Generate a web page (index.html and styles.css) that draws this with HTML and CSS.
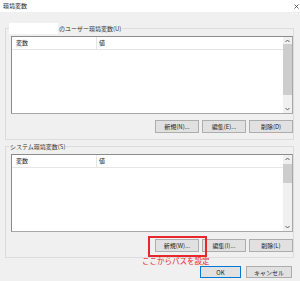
FILE: index.html
```html
<!DOCTYPE html>
<html lang="ja">
<head>
  <meta charset="UTF-8" />
  <title>環境変数</title>
  <link rel="stylesheet" href="styles.css">
</head>
<body>

  <div class="window">
    <div class="titlebar">
      <span class="title">環境変数</span>
      <svg class="close" width="5" height="5" viewBox="0 0 5 5">
        <path d="M0.5 0.5 L4.5 4.5 M4.5 0.5 L0.5 4.5" stroke="#444" stroke-width="0.8" fill="none" />
      </svg>
    </div>

    <div class="content">
      <div class="group">
        <div class="group-title"><span class="redacted"></span><span>のユーザー環境変数(U)</span></div>
        <div class="list">
          <div class="list-main">
            <div class="list-head">
              <span class="col-name">変数</span>
              <span class="col-value">値</span>
            </div>
          </div>
          <div class="scrollbar">
            <svg class="arrow" width="9" height="8" viewBox="0 0 9 8"><path d="M2.5 5 L4.5 3 L6.5 5" stroke="#606060" stroke-width="1" fill="none" /></svg>
            <div class="track"><div class="thumb thumb-user"></div></div>
            <svg class="arrow" width="9" height="8" viewBox="0 0 9 8"><path d="M2.5 3 L4.5 5 L6.5 3" stroke="#606060" stroke-width="1" fill="none" /></svg>
          </div>
        </div>
        <div class="actions">
          <button class="btn">新規(N)...</button>
          <button class="btn">編集(E)...</button>
          <button class="btn">削除(D)</button>
        </div>
      </div>

      <div class="group group-system">
        <div class="group-title"><span>システム環境変数(S)</span></div>
        <div class="list list-system">
          <div class="list-main">
            <div class="list-head">
              <span class="col-name">変数</span>
              <span class="col-value">値</span>
            </div>
          </div>
          <div class="scrollbar">
            <svg class="arrow" width="9" height="8" viewBox="0 0 9 8"><path d="M2.5 5 L4.5 3 L6.5 5" stroke="#606060" stroke-width="1" fill="none" /></svg>
            <div class="track"><div class="thumb thumb-system"></div></div>
            <svg class="arrow" width="9" height="8" viewBox="0 0 9 8"><path d="M2.5 3 L4.5 5 L6.5 3" stroke="#606060" stroke-width="1" fill="none" /></svg>
          </div>
        </div>
        <div class="actions">
          <span class="marked">
            <button class="btn">新規(W)...</button>
            <span class="callout"></span>
            <span class="callout-text">ここからパスを設定</span>
          </span>
          <button class="btn">編集(I)...</button>
          <button class="btn">削除(L)</button>
        </div>
      </div>
    </div>

    <div class="footer">
      <button class="btn btn-ok">OK</button>
      <button class="btn btn-cancel">キャンセル</button>
    </div>
  </div>

</body>
</html>
```

FILE: styles.css
```css
* {
  box-sizing: border-box;
}
body {
  margin: 0;
  font-family: "Noto Sans CJK JP", "Noto Sans", sans-serif;
  font-size: 6px;
  color: #222;
  background: #f0f0f0;
}
.window {
  width: 300px;
  height: 281px;
  display: flex;
  flex-direction: column;
  background: #f0f0f0;
}
.titlebar {
  height: 12px;
  flex: none;
  background: #fff;
  display: flex;
  align-items: center;
  justify-content: space-between;
  padding: 0 1px 0 3px;
}
.title {
  line-height: 10px;
}
.content {
  padding: 16px 6px 0 5px;
}
.group {
  display: flex;
  flex-direction: column;
  padding: 0 0 6px 5px;
  border: 1px solid #dcdcdc;
}
.group-system {
  margin-top: 6px;
  padding-bottom: 5px;
}
.group-title {
  align-self: flex-start;
  display: flex;
  height: 11px;
  line-height: 11px;
  margin: -6px 0 0 -2px;
  padding: 0 1px 0 0;
  background: #f0f0f0;
  color: #333;
}
.group-system .group-title {
  padding-left: 1px;
}
.redacted {
  width: 49px;
  height: 11px;
  margin-right: 1px;
  background: #fff;
}
.list {
  display: flex;
  height: 78px;
  margin-top: 2px;
  background: #fff;
  border: 1px solid #a8a8a8;
  border-left-color: #8c8c8c;
  border-top-color: #8c8c8c;
}
.list-main {
  flex: 1;
}
.list-head {
  display: flex;
  height: 13px;
  line-height: 12px;
  border-bottom: 1px solid #e5e5e5;
}
.col-name {
  width: 85px;
  padding-left: 4px;
  border-right: 1px solid #e5e5e5;
}
.col-value {
  padding-left: 2px;
}
.scrollbar {
  width: 9px;
  display: flex;
  flex-direction: column;
  background: #f0f0f0;
}
.arrow {
  display: block;
  flex: none;
}
.track {
  flex: 1;
}
.thumb {
  background: #cdcdcd;
}
.thumb-user {
  height: 51px;
  margin-top: -1px;
}
.thumb-system {
  height: 19px;
  margin-top: 1px;
}
.actions {
  display: flex;
  justify-content: flex-end;
  gap: 3px;
  margin-top: 6px;
}
.group-system .actions {
  margin-top: 7px;
}
.btn {
  width: 44px;
  height: 13px;
  padding: 0;
  font-family: inherit;
  font-size: 6px;
  line-height: 11px;
  color: #222;
  background: #e1e1e1;
  border: 1px solid #adadad;
}
.marked {
  position: relative;
  display: flex;
}
.callout {
  position: absolute;
  left: -7px;
  top: -3px;
  right: -8px;
  bottom: -5px;
  border: 2px solid #e8262b;
}
.callout-text {
  position: absolute;
  left: -13px;
  top: 17px;
  white-space: nowrap;
  font-size: 7.5px;
  line-height: 9px;
  color: #e8262b;
}
.footer {
  display: flex;
  justify-content: flex-end;
  gap: 5px;
  padding: 8px 8px 0 0;
}
.btn-ok {
  width: 41px;
  height: 12px;
  border-color: #0078d7;
}
.btn-cancel {
  width: 46px;
  height: 12px;
}
```
